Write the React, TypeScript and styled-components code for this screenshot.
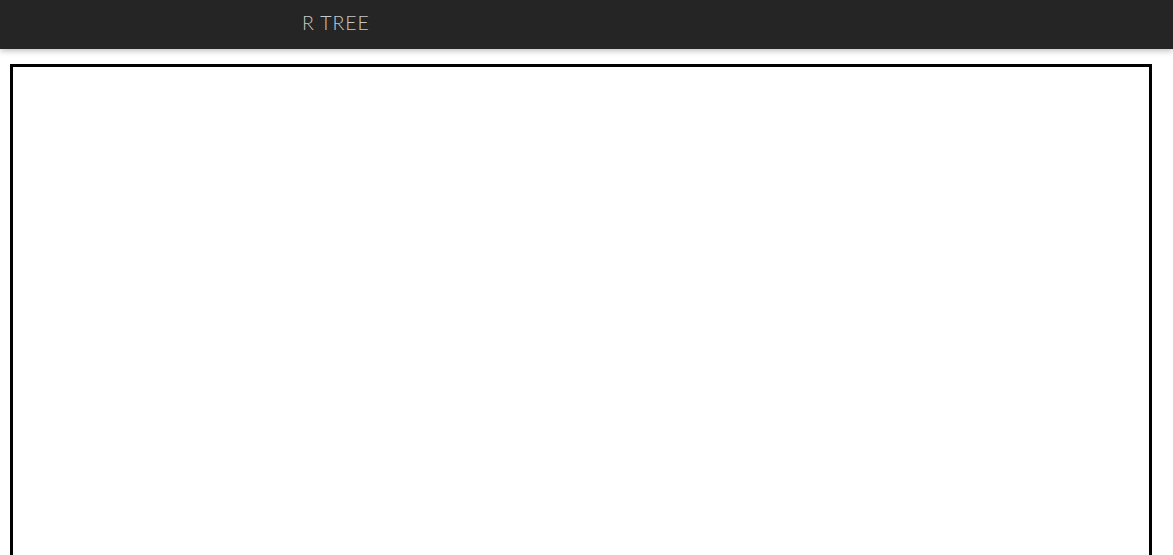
import React from "react";
import styled, { createGlobalStyle } from "styled-components";

const Global = createGlobalStyle`
  html, body { margin: 0; padding: 0; background: #ffffff; overflow: hidden; }
  body { font-family: "Lato", "Open Sans", sans-serif; }
`;

const Header = styled.header`
  height: 49px;
  box-sizing: border-box;
  background: #252525;
  box-shadow: 0 2px 6px rgba(0, 0, 0, 0.25);
  display: flex;
  align-items: center;
  padding: 0 0 3px 302px;
  position: relative;
  z-index: 1;
`;

const Title = styled.h1`
  margin: 0;
  font-family: "Lato", sans-serif;
  font-weight: 300;
  font-size: 19.5px;
  letter-spacing: 0.9px;
  color: #c8c8c8;
  line-height: 1;
`;

const Main = styled.main`
  padding: 15px 0 0 10px;
`;

const Canvas = styled.div`
  width: 1142px;
  height: 600px;
  box-sizing: border-box;
  border: 3px solid #000000;
  background: #ffffff;
`;

export default function App() {
  return (
    <>
      <Global />
      <Header>
        <Title>R TREE</Title>
      </Header>
      <Main>
        <Canvas />
      </Main>
    </>
  );
}
